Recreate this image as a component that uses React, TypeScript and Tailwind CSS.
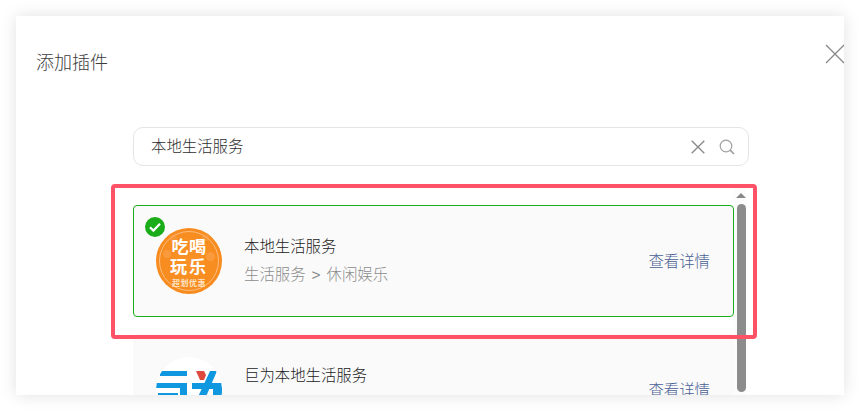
import React from 'react';

const cjk = { fontFamily: '"Liberation Sans", "Noto Sans CJK SC", sans-serif' };

const CrossIcon = ({ size, className }: { size: number; className: string }) => (
  <svg width={size} height={size} viewBox="0 0 20 20" fill="none" className={className}>
    <path d="M1 1l18 18M19 1L1 19" stroke="currentColor" strokeWidth={size > 16 ? 1.3 : 1.9} />
  </svg>
);

const SearchIcon = () => (
  <svg width="16" height="16" viewBox="0 0 16 16" fill="none" className="text-[#a0a0a0] ml-[14px]">
    <circle cx="7" cy="7" r="5.8" stroke="currentColor" strokeWidth="1.2" />
    <path d="M11.2 11.2l3.8 3.8" stroke="currentColor" strokeWidth="1.7" />
  </svg>
);

const OrangeLogo = () => (
  <div className="w-[66px] h-[66px] rounded-full bg-[radial-gradient(circle,#f99227_0%,#f78b1e_70%,#ee7d12_100%)] shrink-0 flex items-center justify-center">
    <div className="relative w-[60px] h-[60px] rounded-full border border-[#fdbd80] flex flex-col items-center pt-[6px] text-white font-bold leading-none">
      <span className="absolute left-[3px] top-[18px] w-[8px] h-[8px] rounded-full bg-[#fdb06a]/40" />
      <span className="absolute right-[3px] top-[20px] w-[9px] h-[9px] rounded-full bg-[#fdb06a]/40" />
      <span className="absolute left-[10px] top-[3px] w-[7px] h-[7px] rounded-full bg-[#fdb06a]/30" />
      <span className="absolute right-[9px] top-[2px] w-[7px] h-[7px] rounded-full bg-[#fdb06a]/30" />
      <div className="relative text-[17px] leading-[20px] tracking-[0.5px]">吃喝</div>
      <div className="relative text-[17px] leading-[20px] tracking-[2px]">玩乐</div>
      <div className="relative text-[8px] leading-[9px] mt-[1px] tracking-[0.5px] text-[#ffe3c4]">超划优惠</div>
    </div>
  </div>
);

const JuweiLogo = () => (
  <div className="w-[66px] h-[66px] rounded-full bg-white shrink-0 overflow-hidden">
    <svg width="66" height="66" viewBox="0 0 66 66" fill="#0f97e0">
      <path d="M4 14h27v5H4zM0 26h31v5H0zM24 31h7v8h-7z" />
      <path d="M2 36h20v5H2z" />
      <path d="M40 14h8l2 4-2 5h-4z" fill="#e0483e" />
      <path d="M36 26h30v6H36z" />
      <path d="M54 14h7L49 42h-8z" />
      <path d="M57 30h9v12h-9z" />
    </svg>
  </div>
);

type CardProps = {
  title: string;
  sub: string[];
  logo: React.ReactNode;
  selected?: boolean;
};

const PluginCard = ({ title, sub, logo, selected }: CardProps) => (
  <div className={`relative h-[112px] shrink-0 rounded-[4px] bg-[#fafafa] border flex items-center pl-[22px] pr-[23px] ${selected ? 'border-[#1aad19]' : 'border-transparent'}`}>
    {selected && (
      <div className="absolute left-[11px] top-[11px] w-5 h-5 rounded-full bg-[#1aad19] flex items-center justify-center z-10">
        <svg width="14" height="14" viewBox="0 0 14 14" fill="none">
          <path d="M2 7.2l3.4 3.4L12 3.8" stroke="white" strokeWidth="2.2" />
        </svg>
      </div>
    )}
    {logo}
    <div className="ml-[22px] flex-1 font-light">
      <div className="text-[15.4px] leading-[20px] text-[#222] -mt-[1px]">{title}</div>
      <div className="text-[15.4px] leading-[20px] text-[#8c8c8c] mt-[8px] flex">
        <span>{sub[0]}</span>
        <span className="mx-[6px]">&gt;</span>
        <span>{sub[1]}</span>
      </div>
    </div>
    <div className="text-[15.4px] leading-[20px] font-light text-[#4a6094] mt-[1px]">查看详情</div>
  </div>
);

export default function App() {
  return (
    <div className="w-[860px] h-[411px] bg-white overflow-hidden pt-4 px-4" style={cjk}>
      <div className="relative w-[828px] h-[379px] bg-white overflow-hidden shadow-[0_0_16px_rgba(0,0,0,0.12)] [clip-path:inset(-16px)]">
        <div className="flex justify-between items-start pl-5 pt-[34px]">
          <h1 className="text-[18px] leading-[26px] text-[#3c3c3c] font-light">添加插件</h1>
          <CrossIcon size={20} className="text-[#888] -mt-[6px] -mr-[11px] relative -left-[10px]" />
        </div>

        <div className="ml-[117px] mt-[51px] w-[616px] h-[39px] border border-[#e5e5e5] rounded-[10px] flex items-center pl-[17px] pr-[13px]">
          <span className="flex-1 text-[15.4px] font-light text-[#2e2e2e]">本地生活服务</span>
          <CrossIcon size={14} className="text-[#888]" />
          <SearchIcon />
        </div>

        <div className="ml-[117px] mt-[18px] flex">
          <div className="w-[601px] pt-[21px] flex flex-col gap-[17px]">
            <PluginCard title="本地生活服务" sub={['生活服务', '休闲娱乐']} logo={<OrangeLogo />} selected />
            <PluginCard title="巨为本地生活服务" sub={['生活服务', '休闲娱乐']} logo={<JuweiLogo />} />
          </div>
          <div className="w-[12px] pt-[9px] flex flex-col items-end bg-[#fcfcfc] h-[300px]">
            <div className="w-0 h-0 border-x-[5px] border-x-transparent border-b-[5px] border-b-[#888]" />
            <div className="w-[9px] h-[188px] mt-[6px] rounded-full bg-[#8c8c8c]" />
          </div>
        </div>

        {/* red highlight over the selected row */}
        <div className="absolute left-[95px] top-[168px] w-[646px] h-[155px] border-4 border-[#ff5266] rounded-[4px] pointer-events-none" />
      </div>
    </div>
  );
}
